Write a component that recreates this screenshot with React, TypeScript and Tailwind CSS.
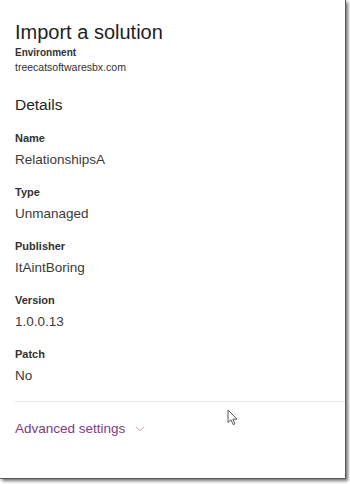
import { ChevronDown } from "lucide-react";

interface Detail {
  label: string;
  value: string;
}

const details: Detail[] = [
  { label: "Name", value: "RelationshipsA" },
  { label: "Type", value: "Unmanaged" },
  { label: "Publisher", value: "ItAintBoring" },
  { label: "Version", value: "1.0.0.13" },
  { label: "Patch", value: "No" },
];

function Cursor() {
  return (
    <svg width="12" height="17" viewBox="0 0 12 17" className="absolute left-[227px] top-[409px]">
      <path d="M1 1 L1 13.5 L4 10.8 L6.2 15.6 L8 14.8 L5.9 10.2 L10 10.2 Z" fill="#fff" stroke="#555" strokeWidth="1" strokeLinejoin="round" />
    </svg>
  );
}

export default function App() {
  return (
    <div className="w-[350px] h-[484px] bg-white relative overflow-hidden" style={{ fontFamily: '"Liberation Sans", Arial, sans-serif' }}>
      <div className="w-[346px] h-[479px] bg-white border-r border-b border-[#5a5a5a] shadow-[2px_2px_3px_rgba(0,0,0,0.55)] flex flex-col">
        <div className="px-[15px] pt-[20px]">
          <h1 className="text-[20px] leading-[24px] text-[#201f1e]">Import a solution</h1>
          <div className="mt-[2px] text-[10px] leading-[14px] font-bold text-[#323130]">Environment</div>
          <div className="text-[10.5px] leading-[15px] text-[#323130]">treecatsoftwaresbx.com</div>

          <h2 className="mt-[20px] text-[15.5px] leading-[20px] text-[#201f1e]">Details</h2>

          <div className="flex flex-col gap-[16px] mt-[16px]">
            {details.map((d) => (
              <div key={d.label} className="flex flex-col gap-[6px]">
                <div className="text-[11px] leading-[14px] font-bold text-[#323130]">{d.label}</div>
                <div className="text-[13.5px] leading-[18px] text-[#3b3a39]">{d.value}</div>
              </div>
            ))}
          </div>
        </div>

        <div className="ml-[15px] mt-[16px] h-px bg-[#e6e6e6]" />

        <div className="px-[15px] mt-[18px] flex items-center gap-[8px] text-[#7e3a85]">
          <span className="text-[13.5px] leading-[18px]">Advanced settings</span>
          <ChevronDown size={14} strokeWidth={1.2} className="text-[#a070a8]" />
        </div>
      </div>
      <Cursor />
    </div>
  );
}
